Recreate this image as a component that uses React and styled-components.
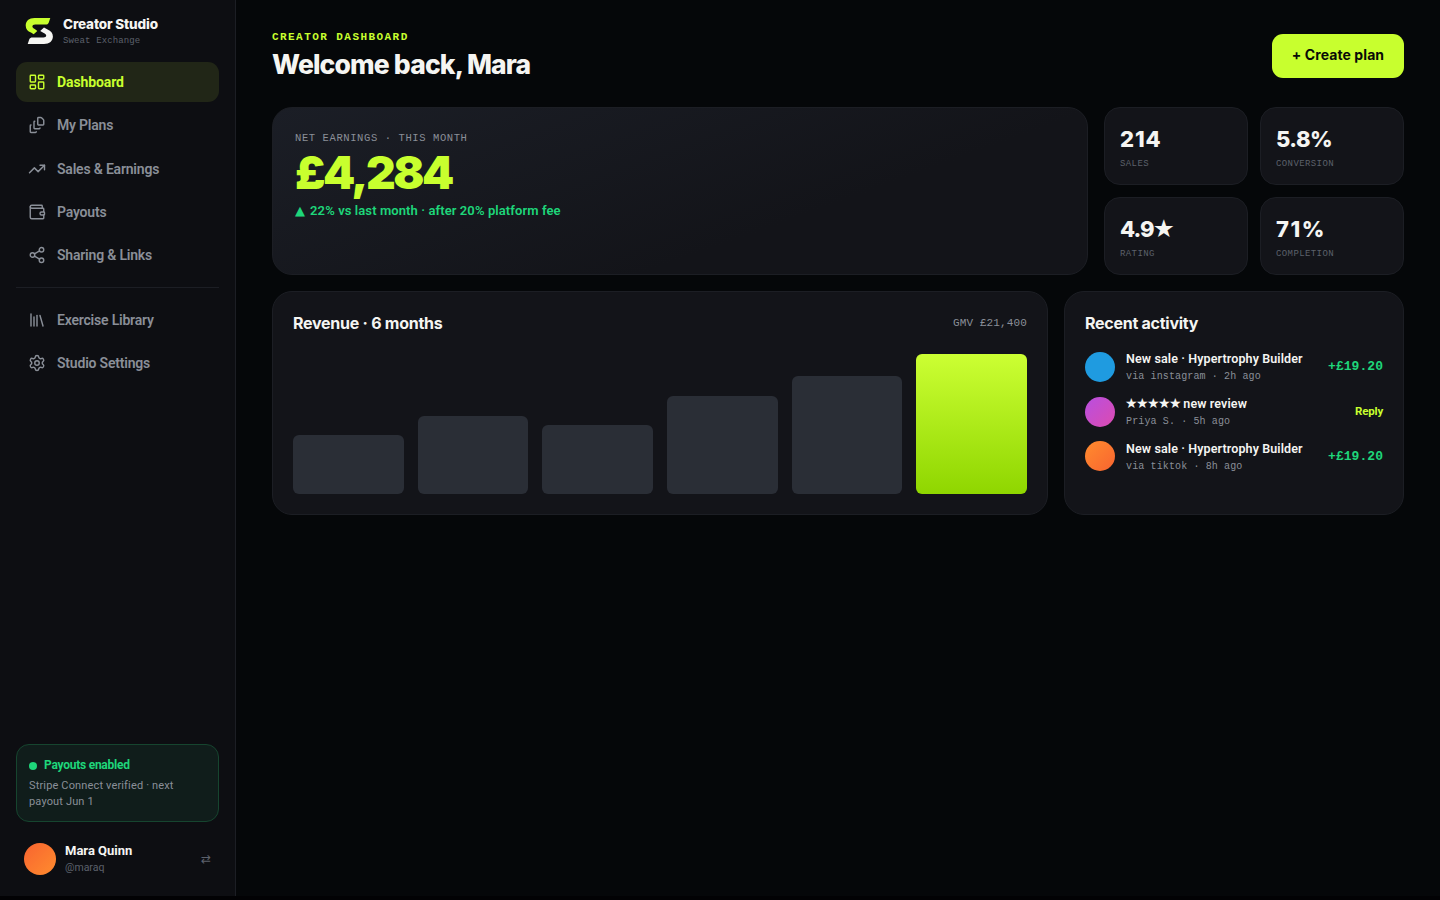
import React from 'react';
import styled, { createGlobalStyle } from 'styled-components';
import {
    FileStack,
    LayoutDashboard,
    Library,
    Settings,
    Share2,
    TrendingUp,
    Wallet,
} from 'lucide-react';

const GlobalStyle = createGlobalStyle`
    :root {
        --color-bg: #050709;
        --color-sidebar: #0d0e12;
        --color-card: #131419;
        --color-line: #1c1e24;
        --color-bar: #2a2e36;
        --color-lime: #c8ff2e;
        --color-green: #1ed67a;
        --color-white: #f5f5f2;
        --color-grey: #8a8f98;
        --color-dim: #5c616b;
        --font-display: Inter, 'DejaVu Sans', sans-serif;
        --font-body: Roboto, 'DejaVu Sans', sans-serif;
        --font-mono: 'Liberation Mono', monospace;
    }

    * {
        box-sizing: border-box;
    }

    body {
        margin: 0;
        background: #020204;
        color: var(--color-white);
        font-family: var(--font-body);
    }
`;

const Layout = styled.div`
    display: flex;
    height: 896px;
    overflow: hidden;
    background: var(--color-bg);
`;

const Sidebar = styled.aside`
    display: flex;
    flex-direction: column;
    width: 236px;
    padding: 16px 16px 21px;
    background: var(--color-sidebar);
    border-right: 1px solid var(--color-line);
`;

const Brand = styled.div`
    display: flex;
    align-items: center;
    gap: 8px;
    height: 30px;
    margin-bottom: 16px;
    padding-left: 8px;

    svg {
        display: block;
    }
`;

const BrandName = styled.div`
    padding-top: 1px;
    font: 800 13.5px/17px var(--font-display);
    letter-spacing: -0.15px;
    white-space: nowrap;
`;

const BrandSub = styled.div`
    margin-top: 1px;
    color: var(--color-dim);
    font: 9px/14px var(--font-mono);
    letter-spacing: 0.12px;
    white-space: nowrap;
`;

const Nav = styled.nav`
    display: flex;
    flex-direction: column;
    gap: 3.3px;
`;

const NavItem = styled.a`
    display: flex;
    align-items: center;
    gap: 11px;
    height: 40px;
    padding: 0 12px;
    border-radius: 11px;
    color: ${(props) => (props.$active ? 'var(--color-lime)' : 'var(--color-grey)')};
    background: ${(props) => (props.$active ? '#212617' : 'transparent')};
    font-size: 14px;
    font-weight: ${(props) => (props.$active ? 700 : 600)};
    letter-spacing: ${(props) => (props.$active ? '-0.1px' : '-0.2px')};
`;

const Divider = styled.div`
    height: 1px;
    margin: 12px 0;
    background: var(--color-line);
`;

const PayoutCard = styled.div`
    height: 78px;
    margin-top: auto;
    padding: 12px 12px 0;
    border: 1px solid #16452f;
    border-radius: 13px;
    background: #101d1b;
`;

const PayoutTitle = styled.div`
    display: flex;
    align-items: center;
    gap: 7px;
    color: var(--color-green);
    font-size: 12px;
    font-weight: 700;
    line-height: 17px;
    letter-spacing: -0.25px;

    &::before {
        content: '';
        width: 8px;
        height: 8px;
        border-radius: 50%;
        background: var(--color-green);
    }
`;

const PayoutText = styled.div`
    margin-top: 4px;
    color: var(--color-grey);
    font-size: 11px;
    line-height: 16px;
    letter-spacing: 0.15px;
`;

const User = styled.div`
    display: flex;
    align-items: center;
    height: 33px;
    margin-top: 20px;
    padding: 0 8px;
`;

const UserText = styled.div`
    flex: 1;
    margin-left: 9px;
`;

const UserName = styled.div`
    font-size: 13px;
    font-weight: 700;
    line-height: 17px;
`;

const Handle = styled.div`
    color: var(--color-dim);
    font-size: 10.5px;
    line-height: 17px;
`;

const Swap = styled.span`
    color: var(--color-dim);
    font: 12px/16px 'DejaVu Sans', sans-serif;
`;

const Avatar = styled.div`
    flex: none;
    width: ${(props) => props.$size}px;
    height: ${(props) => props.$size}px;
    border-radius: 50%;
    background: ${(props) => props.$fill};
`;

const Main = styled.main`
    flex: 1;
    padding: 28px 36px;
`;

const Header = styled.header`
    display: flex;
    align-items: center;
    justify-content: space-between;
    height: 55px;
    margin-bottom: 24px;
`;

const Eyebrow = styled.div`
    color: var(--color-lime);
    font: 700 11px/16px var(--font-mono);
    letter-spacing: 1.44px;
`;

const Title = styled.h1`
    margin: 2px 0 1px;
    font: 800 26.5px/34px var(--font-display);
    letter-spacing: -0.85px;
`;

const CreateButton = styled.button`
    width: 132px;
    height: 44px;
    padding: 0 0 1px;
    border: 0;
    border-radius: 11px;
    color: #090b06;
    background: var(--color-lime);
    font: 700 14px/20px var(--font-display);
    letter-spacing: 0.08px;
`;

const TopRow = styled.section`
    display: grid;
    grid-template-columns: 1fr 300px;
    gap: 16px;
    height: 168px;
    margin-bottom: 16px;
`;

const BottomRow = styled.section`
    display: grid;
    grid-template-columns: 1fr 340px;
    gap: 16px;
    height: 224px;
`;

const Card = styled.div`
    padding: 20px;
    border: 1px solid var(--color-line);
    border-radius: 20px;
    background: var(--color-card);
`;

const Hero = styled(Card)`
    padding: 23px 22px;
    background: linear-gradient(160deg, #1b1e26, #131419 65%);
`;

const HeroLabel = styled.div`
    color: var(--color-grey);
    font: 10.5px/15px var(--font-mono);
    letter-spacing: 0.6px;
`;

const HeroValue = styled.div`
    color: var(--color-lime);
    font: 900 46px/52px var(--font-display);
    letter-spacing: -2.45px;
`;

const HeroDelta = styled.div`
    display: flex;
    gap: 5px;
    margin-top: 4px;
    color: var(--color-green);
    font-size: 13px;
    font-weight: 600;
    line-height: 18px;
    letter-spacing: 0.09px;
`;

const Stats = styled.div`
    display: grid;
    grid-template-columns: 1fr 1fr;
    grid-template-rows: 1fr 1fr;
    gap: 12px;
`;

const Stat = styled(Card)`
    padding: 17px 15px 0;
    border-radius: 16px;
`;

const StatValue = styled.div`
    font: 800 22px/28px var(--font-display);
    letter-spacing: ${(props) => props.$spacing};
`;

const StatLabel = styled.div`
    margin-top: 4px;
    color: var(--color-dim);
    font: 9px/14px var(--font-mono);
    letter-spacing: 0.4px;
`;

const Stars = styled.span`
    margin-left: -1px;
    font-family: 'DejaVu Sans', sans-serif;
    font-size: 1.12em;
    font-weight: 400;
    line-height: 1;
    letter-spacing: -0.11em;
`;

const CardHead = styled.div`
    display: flex;
    align-items: center;
    justify-content: space-between;
    height: 22px;
`;

const CardTitle = styled.h2`
    margin: 0;
    font: 700 16px/22px var(--font-display);
    letter-spacing: -0.26px;
`;

const Note = styled.span`
    color: var(--color-grey);
    font: 11px/16px var(--font-mono);
    letter-spacing: 0.13px;
`;

const Chart = styled.div`
    display: flex;
    align-items: flex-end;
    gap: 14px;
    height: 140px;
    margin-top: 20px;
`;

const Bar = styled.div`
    flex: 1;
    border-radius: 6px;
    background: ${(props) => (props.$current ? 'linear-gradient(180deg, #ccff33, #8fd600)' : 'var(--color-bar)')};
`;

const Feed = styled.div`
    display: flex;
    flex-direction: column;
    gap: 10px;
    margin-top: 15.5px;
`;

const FeedItem = styled.div`
    display: flex;
    align-items: center;
    height: 34.8px;
`;

const FeedText = styled.div`
    flex: 1;
    margin-left: 11px;
    white-space: nowrap;
`;

const FeedTitle = styled.div`
    height: 18px;
    padding-top: 1px;
    font-size: 12.5px;
    font-weight: 600;
    line-height: 18px;
    letter-spacing: 0.12px;
`;

const FeedMeta = styled.div`
    margin-top: 1px;
    color: var(--color-grey);
    font: 10px/17px var(--font-mono);
    letter-spacing: 0.13px;
`;

const Amount = styled.span`
    padding-top: 1px;
    color: var(--color-green);
    font: 700 13px/18px var(--font-mono);
    letter-spacing: 0.05px;
`;

const Reply = styled.a`
    padding-bottom: 1px;
    color: var(--color-lime);
    font-size: 11.5px;
    font-weight: 700;
    letter-spacing: -0.2px;
`;

const MAIN_LINKS = [
    { label: 'Dashboard', icon: LayoutDashboard, active: true },
    { label: 'My Plans', icon: FileStack },
    { label: 'Sales & Earnings', icon: TrendingUp },
    { label: 'Payouts', icon: Wallet },
    { label: 'Sharing & Links', icon: Share2 },
];

const EXTRA_LINKS = [
    { label: 'Exercise Library', icon: Library },
    { label: 'Studio Settings', icon: Settings },
];

const STATS = [
    { value: '214', label: 'SALES', spacing: '0.9px' },
    { value: '5.8%', label: 'CONVERSION', spacing: '-0.5px' },
    { value: '4.9', stars: '★', label: 'RATING', spacing: '-0.9px' },
    { value: '71%', label: 'COMPLETION', spacing: '1.6px' },
];

const REVENUE = [42, 56, 49, 70, 84, 100];

const ACTIVITY = [
    {
        title: 'New sale · Hypertrophy Builder',
        meta: 'via instagram · 2h ago',
        amount: '+£19.20',
        fill: '#1f9be0',
    },
    {
        stars: '★★★★★',
        title: ' new review',
        meta: 'Priya S. · 5h ago',
        fill: 'linear-gradient(135deg, #b84fe0, #dc4bb0)',
    },
    {
        title: 'New sale · Hypertrophy Builder',
        meta: 'via tiktok · 8h ago',
        amount: '+£19.20',
        fill: 'linear-gradient(135deg, #ff8c2e, #f86430)',
    },
];

const Logo = () => (
    <svg width="31" height="30" viewBox="0 0 31 30">
        <path
            fill="var(--color-lime)"
            d="M26.300 2H10.500C5 2 1.700 5 1.700 9.500c0 3.600 2 5.800 5.300 7.100l2.700 1.600L13.300 15l-2.500-2.100c-1.500-.7-2.400-1.300-2.400-2.400 0-1.300 1-2 2.800-2H21.500c1.700 0 2.600-.5 3.200-1.800z"
        />
        <path
            fill="var(--color-white)"
            d="M3.700 28H20c5.500 0 8.900-3 8.900-7.500 0-3.600-2-5.800-5.300-7.100L20 11.500 16.200 15l3.500 1.900c1.500.7 2.500 1.500 2.500 2.600 0 1.300-1 2-2.800 2H8.500c-1.700 0-2.600.5-3.200 1.800z"
        />
    </svg>
);

const NavLinks = ({ items }) => (
    <Nav>
        {items.map(({ label, icon: Icon, active }) => (
            <NavItem key={label} $active={active}>
                <Icon size={18} strokeWidth={1.9} />
                {label}
            </NavItem>
        ))}
    </Nav>
);

const App = () => (
    <>
        <GlobalStyle />
        <Layout>
            <Sidebar>
                <Brand>
                    <Logo />
                    <div>
                        <BrandName>Creator Studio</BrandName>
                        <BrandSub>Sweat Exchange</BrandSub>
                    </div>
                </Brand>
                <NavLinks items={MAIN_LINKS} />
                <Divider />
                <NavLinks items={EXTRA_LINKS} />
                <PayoutCard>
                    <PayoutTitle>Payouts enabled</PayoutTitle>
                    <PayoutText>
                        Stripe Connect verified · next
                        <br />
                        payout Jun 1
                    </PayoutText>
                </PayoutCard>
                <User>
                    <Avatar $size={32} $fill="linear-gradient(135deg, #f86430, #ff8c2e)" />
                    <UserText>
                        <UserName>Mara Quinn</UserName>
                        <Handle>@maraq</Handle>
                    </UserText>
                    <Swap>⇄</Swap>
                </User>
            </Sidebar>
            <Main>
                <Header>
                    <div>
                        <Eyebrow>CREATOR DASHBOARD</Eyebrow>
                        <Title>Welcome back, Mara</Title>
                    </div>
                    <CreateButton>+ Create plan</CreateButton>
                </Header>
                <TopRow>
                    <Hero>
                        <HeroLabel>NET EARNINGS · THIS MONTH</HeroLabel>
                        <HeroValue>£4,284</HeroValue>
                        <HeroDelta>
                            <span>▲</span>
                            22% vs last month · after 20% platform fee
                        </HeroDelta>
                    </Hero>
                    <Stats>
                        {STATS.map(({ value, stars, label, spacing }) => (
                            <Stat key={label}>
                                <StatValue $spacing={spacing}>
                                    {value}
                                    {stars ? <Stars>{stars}</Stars> : null}
                                </StatValue>
                                <StatLabel>{label}</StatLabel>
                            </Stat>
                        ))}
                    </Stats>
                </TopRow>
                <BottomRow>
                    <Card>
                        <CardHead>
                            <CardTitle>Revenue · 6 months</CardTitle>
                            <Note>GMV £21,400</Note>
                        </CardHead>
                        <Chart>
                            {REVENUE.map((percent) => (
                                <Bar
                                    key={percent}
                                    $current={percent === 100}
                                    style={{ height: `${percent}%` }}
                                />
                            ))}
                        </Chart>
                    </Card>
                    <Card>
                        <CardHead>
                            <CardTitle>Recent activity</CardTitle>
                        </CardHead>
                        <Feed>
                            {ACTIVITY.map((item) => (
                                <FeedItem key={item.meta}>
                                    <Avatar $size={30} $fill={item.fill} />
                                    <FeedText>
                                        <FeedTitle>
                                            {item.stars ? <Stars>{item.stars}</Stars> : null}
                                            {item.title}
                                        </FeedTitle>
                                        <FeedMeta>{item.meta}</FeedMeta>
                                    </FeedText>
                                    {item.amount ? <Amount>{item.amount}</Amount> : <Reply>Reply</Reply>}
                                </FeedItem>
                            ))}
                        </Feed>
                    </Card>
                </BottomRow>
            </Main>
        </Layout>
    </>
);

export default App;
